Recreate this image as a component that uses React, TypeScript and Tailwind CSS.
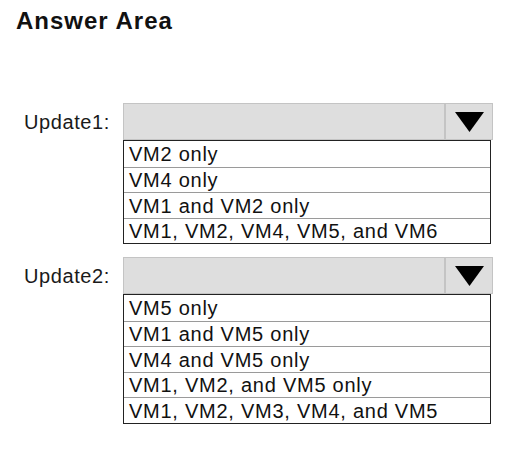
import React from 'react';

const LISTS = [
  {
    label: 'Update1:',
    options: ['VM2 only', 'VM4 only', 'VM1 and VM2 only', 'VM1, VM2, VM4, VM5, and VM6'],
  },
  {
    label: 'Update2:',
    options: [
      'VM5 only',
      'VM1 and VM5 only',
      'VM4 and VM5 only',
      'VM1, VM2, and VM5 only',
      'VM1, VM2, VM3, VM4, and VM5',
    ],
  },
];

const Dropdown: React.FC<{ label: string; options: string[] }> = ({ label, options }) => (
  <div className="flex">
    <div className="w-[123px] h-[37px] pl-[24px] flex items-center text-[20px] tracking-[0.6px] text-[#1a1a1a]">
      {label}
    </div>
    <div className="flex flex-col">
      {/* closed select */}
      <div className="flex w-[370px] h-[37px] bg-[#dedede] border border-[#c4c4c4]">
        <div className="flex-1 border-r-2 border-[#c4c4c4]" />
        <div className="w-[46px] flex items-center justify-center">
          <svg width="29" height="20" viewBox="0 0 29 20">
            <polygon points="0,0 29,0 14.5,20" fill="#000" />
          </svg>
        </div>
      </div>
      {/* open option list */}
      <div className="w-[368px] border-[1.5px] border-[#222] bg-white">
        {options.map((o, i) => (
          <div
            key={o}
            className={`h-[25.5px] flex items-center pl-[5px] pt-[1px] text-[20px] tracking-[0.75px] text-[#111] leading-none ${
              i > 0 ? 'border-t border-[#9a9a9a]' : ''
            }`}
          >
            {o}
          </div>
        ))}
      </div>
    </div>
  </div>
);

export default function App() {
  return (
    <div
      className="w-[513px] h-[451px] bg-white pt-[7px]"
      style={{ fontFamily: '"Liberation Sans", Arial, sans-serif' }}
    >
      <h1 className="pl-[16px] text-[24px] leading-[28px] tracking-[1px] font-bold text-[#111]">Answer Area</h1>
      <div className="mt-[68px] flex flex-col gap-[13px]">
        {LISTS.map((l) => (
          <Dropdown key={l.label} label={l.label} options={l.options} />
        ))}
      </div>
    </div>
  );
}
